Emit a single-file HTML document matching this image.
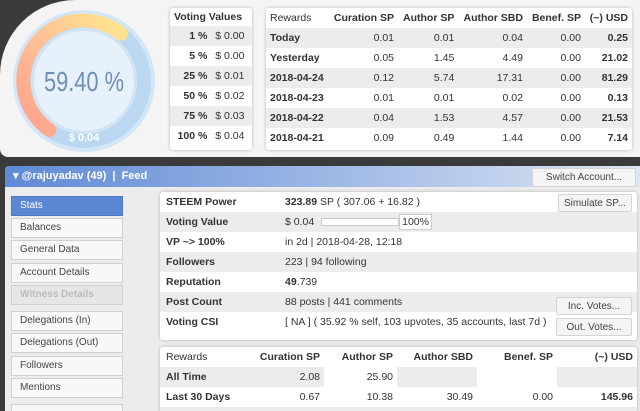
<!DOCTYPE html><html style="width:640px;height:411px;overflow:hidden"><head><style>
*{box-sizing:border-box;margin:0;padding:0}
body{width:640px;height:411px;background:#3a3a3a;font-family:"Liberation Sans",sans-serif;font-size:10.5px;color:#333;position:relative;overflow:hidden}
.top{position:absolute;left:0;top:0;width:640px;height:157px;background:#f4f4f4;border-top-left-radius:75px;border-bottom-left-radius:8px}
.card{position:absolute;background:#fff;box-shadow:0 0 3px rgba(0,0,0,.25);border-radius:3px;overflow:hidden}
table{border-collapse:collapse}
td,th{height:20px;padding:0 4px;white-space:nowrap}
th{font-weight:bold;text-align:left}
.r{text-align:right}
.g{background:#ececec}
.b{font-weight:bold}
.bot{position:absolute;left:5px;top:166px;width:635px;height:245px;background:#ececec;border-radius:4px 0 0 0}
.hdr{height:21px;background:linear-gradient(90deg,#5f8ad6,#a9c0e8 60%,#dfe6f2);color:#fff;font-weight:bold;padding:3px 8px;font-size:11px;border-radius:4px 0 0 0}
.btn{position:absolute;background:#f4f4f4;border:1px solid #d4d4d4;border-radius:2px;text-align:center;font-size:10px;color:#444;line-height:17px}
.side{position:absolute;left:11px;width:112px;height:20px;background:#f8f8f8;border:1px solid #d0d0d0;padding-left:8px;line-height:18px;font-size:10px;color:#444}
</style></head><body>
<div class="top"></div>
<svg style="position:absolute;left:0;top:0" width="165" height="160">
<defs><linearGradient id="a" x1="0" y1="1" x2="1" y2="0"><stop offset="0" stop-color="#ffa08c"/><stop offset=".6" stop-color="#ffc896"/><stop offset="1" stop-color="#ffe68c"/></linearGradient></defs>
<circle cx="84" cy="81" r="71" fill="#d3e6f6"/>
<circle cx="84" cy="81" r="60" fill="none" stroke="#bcd8f0" stroke-width="14"/>
<path d="M49.6 130.1 A60 60 0 1 1 120.9 33.7" fill="none" stroke="url(#a)" stroke-width="14" stroke-linecap="round"/>
<circle cx="84" cy="81" r="51" fill="#e6f1fb" stroke="#cfe3f5" stroke-width="2"/>
<text transform="translate(84,91) scale(0.78,1)" text-anchor="middle" font-family="Liberation Sans,sans-serif" font-size="28" fill="#6f8fb5">59.40 %</text>
<text x="84" y="141" text-anchor="middle" font-size="11" font-weight="bold" fill="#fff">$ 0.04</text>
</svg>
<div class="card" style="left:170px;top:8px;width:82px;height:142px">
<table style="width:82px"><tr><th colspan="2" style="height:18px">Voting Values</th></tr>
<tr><td class="r b g">1 %</td><td class="g">$ 0.00</td></tr>
<tr><td class="r b">5 %</td><td>$ 0.00</td></tr>
<tr><td class="r b g">25 %</td><td class="g">$ 0.01</td></tr>
<tr><td class="r b">50 %</td><td>$ 0.02</td></tr>
<tr><td class="r b g">75 %</td><td class="g">$ 0.03</td></tr>
<tr><td class="r b">100 %</td><td>$ 0.04</td></tr></table></div>
<div class="card" style="left:266px;top:8px;width:366px;height:142px">
<table style="width:366px"><tr><th style="height:18px;font-weight:normal">Rewards</th><th class="r">Curation SP</th><th class="r">Author SP</th><th class="r">Author SBD</th><th class="r">Benef. SP</th><th class="r">(~) USD</th></tr>
<tr class="g"><td class="b">Today</td><td class="r">0.01</td><td class="r">0.01</td><td class="r">0.04</td><td class="r">0.00</td><td class="r b">0.25</td></tr>
<tr><td class="b">Yesterday</td><td class="r">0.05</td><td class="r">1.45</td><td class="r">4.49</td><td class="r">0.00</td><td class="r b">21.02</td></tr>
<tr class="g"><td class="b">2018-04-24</td><td class="r">0.12</td><td class="r">5.74</td><td class="r">17.31</td><td class="r">0.00</td><td class="r b">81.29</td></tr>
<tr><td class="b">2018-04-23</td><td class="r">0.01</td><td class="r">0.01</td><td class="r">0.02</td><td class="r">0.00</td><td class="r b">0.13</td></tr>
<tr class="g"><td class="b">2018-04-22</td><td class="r">0.04</td><td class="r">1.53</td><td class="r">4.57</td><td class="r">0.00</td><td class="r b">21.53</td></tr>
<tr><td class="b">2018-04-21</td><td class="r">0.09</td><td class="r">0.49</td><td class="r">1.44</td><td class="r">0.00</td><td class="r b">7.14</td></tr></table></div>
<div class="bot"><div class="hdr">▾ @rajuyadav (49) &nbsp;| &nbsp;Feed</div></div>
<div class="btn" style="left:532px;top:168px;width:104px;height:19px">Switch Account...</div>
<div class="side" style="top:196px;background:#5b86d3;color:#fff;border-color:#4a76c4">Stats</div>
<div class="side" style="top:218px">Balances</div>
<div class="side" style="top:240px">General Data</div>
<div class="side" style="top:263px">Account Details</div>
<div class="side" style="top:285px;background:#e6e6e6;color:#bbb;font-weight:bold">Witness Details</div>
<div class="side" style="top:311px">Delegations (In)</div>
<div class="side" style="top:333px">Delegations (Out)</div>
<div class="side" style="top:356px">Followers</div>
<div class="side" style="top:378px">Mentions</div>
<div class="side" style="top:404px"></div>
<div class="card" style="left:160px;top:192px;width:477px;height:148px">
<table style="width:477px">
<tr><td class="b" style="width:121px;padding-left:6px">STEEM Power</td><td><b>323.89</b> SP ( 307.06 + 16.82 )</td></tr>
<tr class="g"><td class="b" style="padding-left:6px">Voting Value</td><td>$ 0.04 <span style="display:inline-block;width:78px;height:8px;border:1px solid #ccc;background:#fff;vertical-align:middle;margin-left:4px"></span><span style="border:1px solid #ccc;background:#fff;padding:1px 2px">100%</span></td></tr>
<tr><td class="b" style="padding-left:6px">VP ~&gt; 100%</td><td>in 2d | 2018-04-28, 12:18</td></tr>
<tr class="g"><td class="b" style="padding-left:6px">Followers</td><td>223 | 94 following</td></tr>
<tr><td class="b" style="padding-left:6px">Reputation</td><td><b>49</b>.739</td></tr>
<tr class="g"><td class="b" style="padding-left:6px">Post Count</td><td>88 posts | 441 comments</td></tr>
<tr><td class="b" style="padding-left:6px">Voting CSI</td><td>[ NA ] ( 35.92 % self, 103 upvotes, 35 accounts, last 7d )</td></tr></table></div>
<div class="btn" style="left:558px;top:194px;width:74px;height:18px">Simulate SP...</div>
<div class="btn" style="left:556px;top:297px;width:76px;height:18px">Inc. Votes...</div>
<div class="btn" style="left:556px;top:318px;width:76px;height:18px">Out. Votes...</div>
<div class="card" style="left:160px;top:347px;width:477px;height:70px">
<table style="width:477px">
<tr><th style="font-weight:normal;height:19px;width:78px;padding-left:6px">Rewards</th><th class="r" style="width:86px">Curation SP</th><th class="r" style="width:73px">Author SP</th><th class="r" style="width:80px">Author SBD</th><th class="r" style="width:80px">Benef. SP</th><th class="r">(~) USD</th></tr>
<tr class="g"><td class="b" style="padding-left:6px">All Time</td><td class="r">2.08</td><td class="r" style="background:#fff">25.90</td><td></td><td style="background:#fff"></td><td></td></tr>
<tr><td class="b" style="padding-left:6px">Last 30 Days</td><td class="r">0.67</td><td class="r">10.38</td><td class="r">30.49</td><td class="r">0.00</td><td class="r b">145.96</td></tr>
<tr class="g"><td></td><td></td><td></td><td></td><td></td><td></td></tr></table></div>
</body></html>
